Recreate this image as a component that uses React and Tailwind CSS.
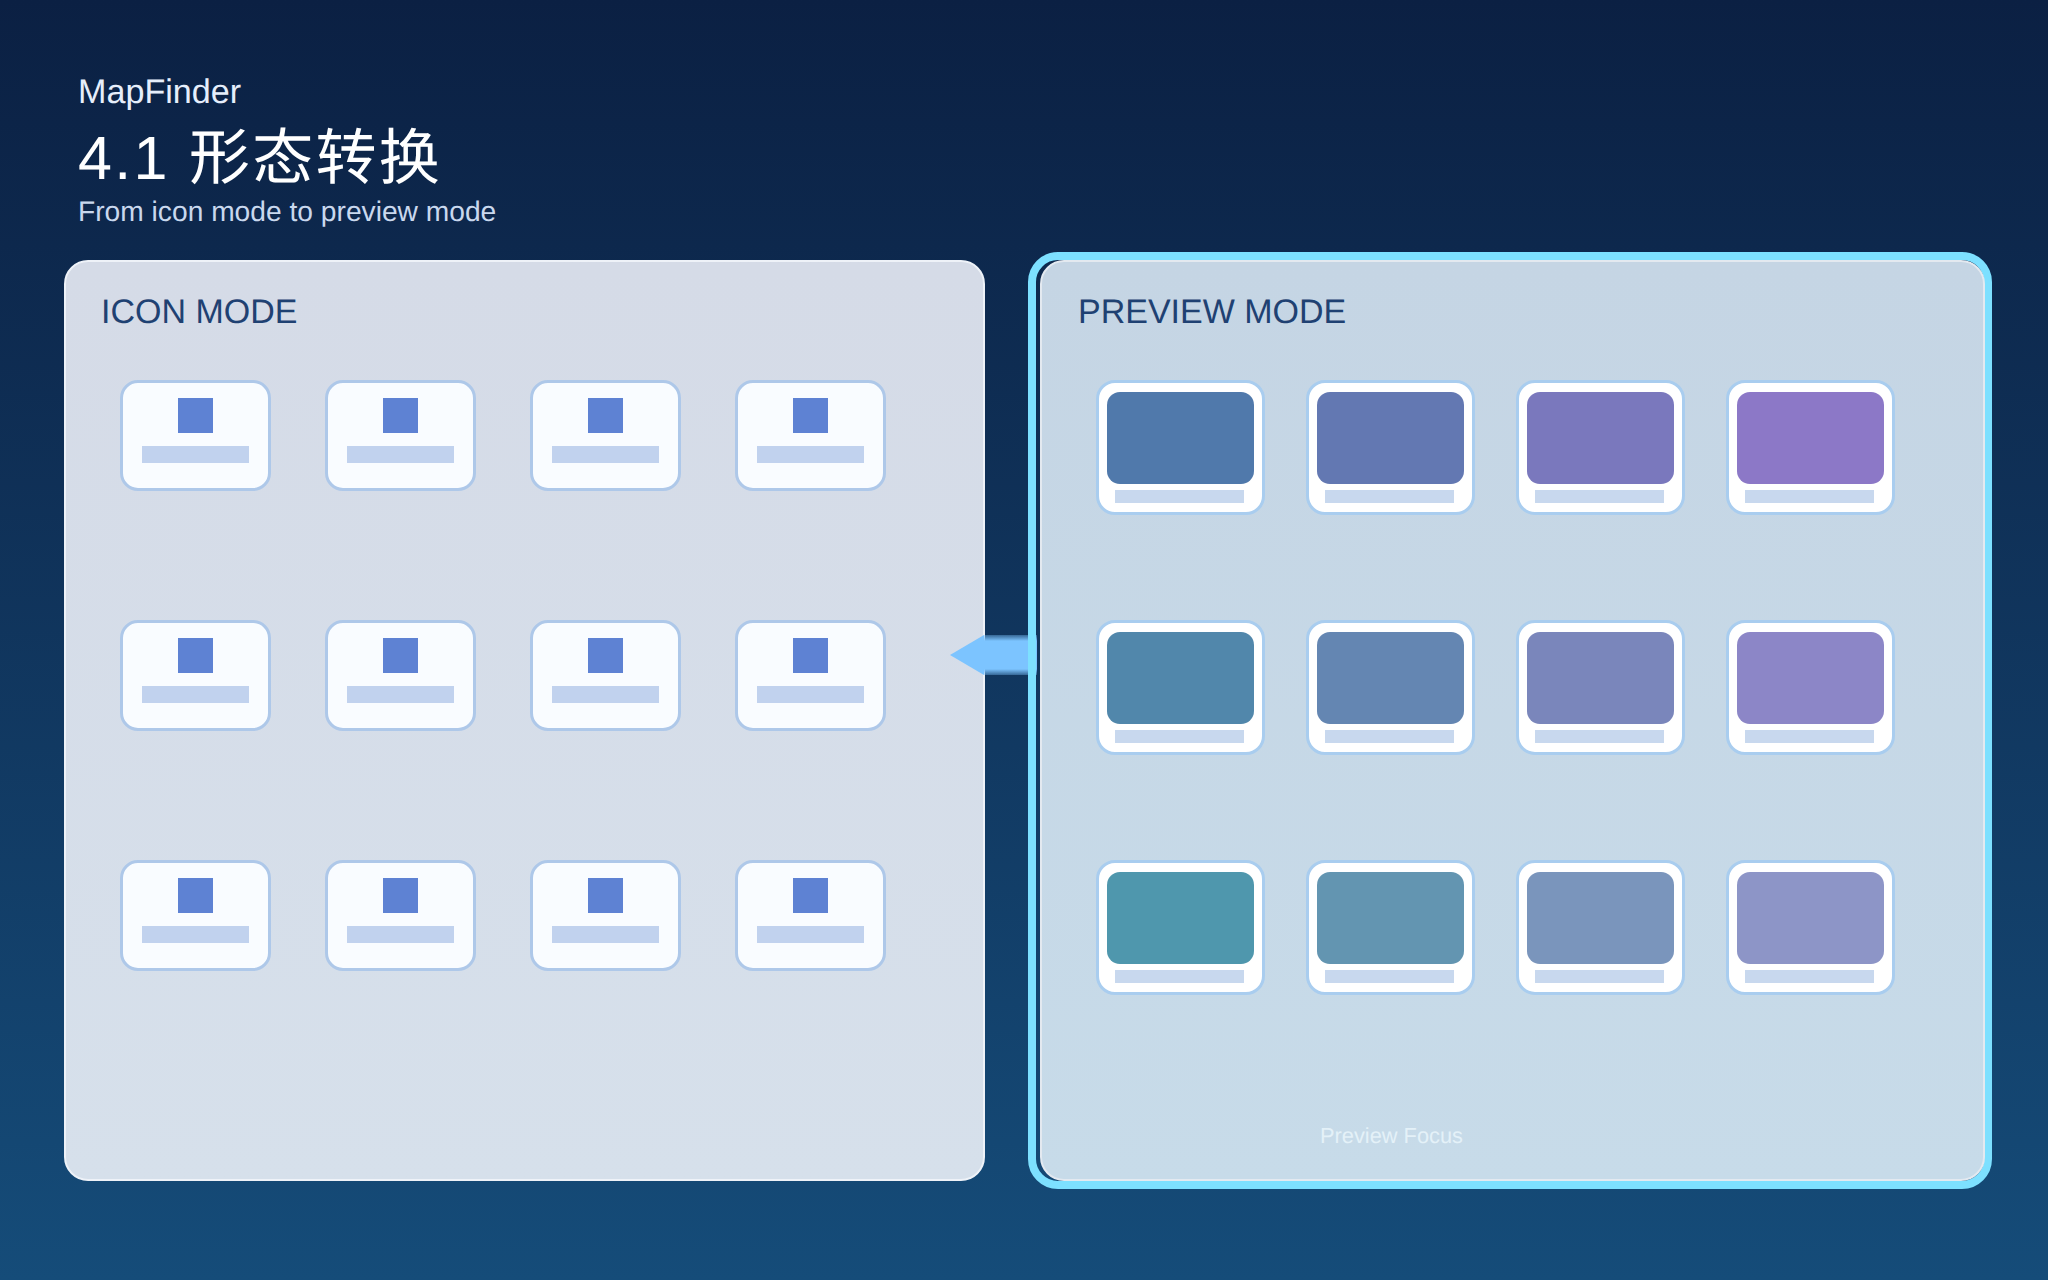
const previewColors = [
  ["bg-[#5079ab]", "bg-[#6378b2]", "bg-[#7a78bd]", "bg-[#8c78c7]"],
  ["bg-[#5187ab]", "bg-[#6486b2]", "bg-[#7a86bb]", "bg-[#8c86c7]"],
  ["bg-[#4f97ad]", "bg-[#6395b1]", "bg-[#7a95bc]", "bg-[#8d95c7]"],
];
const font = "font-['Liberation_Sans','Noto_Sans_CJK_SC',sans-serif] [text-rendering:geometricPrecision]";

function IconTile() {
  return (
    <div className="flex h-[111px] w-[151px] flex-col items-center rounded-[18px] border-[3px] border-[#aec8e9] bg-[#f9fcff] pt-[15px]">
      <div className="h-[35px] w-[35px] bg-[#5e82d3]" />
      <div className="mt-[13px] h-[17px] w-[107px] bg-[#c1d2ee]" />
    </div>
  );
}

function PreviewTile({ color }) {
  return (
    <div className="flex h-[135px] w-[169px] flex-col items-center rounded-[19px] border-[3px] border-[#a9cdef] bg-white pt-[9px]">
      <div className={`h-[92px] w-[147px] rounded-[13px] ${color}`} />
      <div className="mr-[2px] mt-[6px] h-[13px] w-[129px] bg-[#c8d8ee]" />
    </div>
  );
}

export default function App() {
  return (
    <div className={`h-[1280px] w-[2048px] overflow-hidden bg-gradient-to-b from-[#0b2043] to-[#154c79] pl-[64px] pt-[72px] ${font}`}>
      <div className="pl-[14px]">
        <div className="text-[34.13px] leading-[40px] text-[#e6eefb]">MapFinder</div>
        <div className="mt-[13px] text-[61px] leading-[66px] tracking-[2.3px] text-white">4.1 形态转换</div>
        <div className="mt-[4px] text-[28.2px] leading-[32px] text-[#c9d8ee]">From icon mode to preview mode</div>
      </div>

      <div className="relative mt-[25px] flex items-start">
        <div className="mt-[8px] h-[921px] w-[921px] rounded-[24px] border-2 border-[#eef2f8] bg-gradient-to-b from-[#d5dbe7] to-[#d6e0eb] pl-[35px] pt-[30px]">
          <div className="text-[34px] leading-[40px] text-[#1f4172]">ICON MODE</div>
          <div className="ml-[19px] mt-[48px] grid w-fit grid-cols-[repeat(4,151px)] gap-x-[54px] gap-y-[129px]">
            {Array.from({ length: 12 }, (_, i) => (
              <IconTile key={i} />
            ))}
          </div>
        </div>

        <svg className="absolute left-[886px] top-[380px]" width="90" height="50" viewBox="0 0 90 50">
          <defs>
            <linearGradient id="arrowBody" x1="0" y1="3" x2="0" y2="43" gradientUnits="userSpaceOnUse">
              <stop offset="0" stopColor="#7cc4ff" stopOpacity="0.35" />
              <stop offset="0.15" stopColor="#7cc4ff" />
              <stop offset="0.85" stopColor="#7cc4ff" />
              <stop offset="1" stopColor="#7cc4ff" stopOpacity="0.35" />
            </linearGradient>
          </defs>
          <polygon points="0,23 34,3 34,43" fill="#7cc4ff" />
          <rect x="34" y="3" width="53" height="40" fill="url(#arrowBody)" />
        </svg>

        <div className="relative z-10 ml-[43px] h-[937px] w-[964px] rounded-[30px] border-8 border-[#7de0ff] pl-[4px]">
          <div className="h-[921px] w-[945px] rounded-[24px] border-2 border-[#e3e9f0] bg-gradient-to-b from-[#c5d5e4] to-[#c7dbe9] pl-[36px] pt-[30px]">
            <div className="text-[34px] leading-[40px] text-[#1f4172]">PREVIEW MODE</div>
            <div className="ml-[18px] mt-[48px] grid w-fit grid-cols-[repeat(4,169px)] gap-x-[41px] gap-y-[105px]">
              {previewColors.flat().map((c, i) => (
                <PreviewTile key={i} color={c} />
              ))}
            </div>
            <div className="ml-[242px] mt-[128px] w-fit text-[21.8px] leading-[26px] text-[#e4f1f8]">Preview Focus</div>
          </div>
        </div>
      </div>
    </div>
  );
}
